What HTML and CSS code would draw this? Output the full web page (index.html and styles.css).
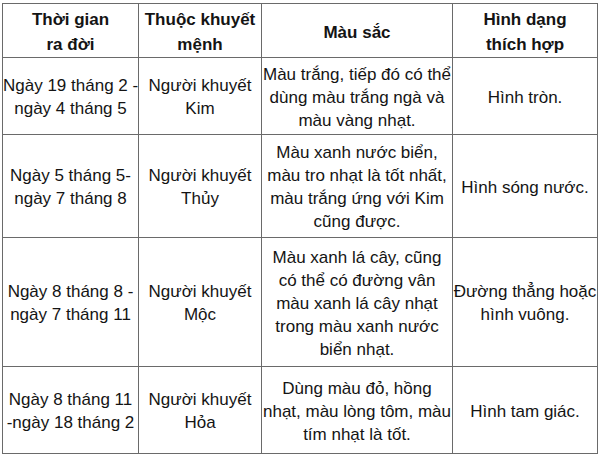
FILE: index.html
```html
<!DOCTYPE html>
<html lang="vi">
<head>
<meta charset="utf-8">
<title>Bảng màu sắc</title>
<link rel="stylesheet" href="styles.css">
</head>
<body>
<table class="grid">
  <colgroup>
    <col class="c1"><col class="c2"><col class="c3"><col class="c4">
  </colgroup>
  <thead>
    <tr class="r-head">
      <th>Thời gian<br>ra đời</th>
      <th>Thuộc khuyết<br>mệnh</th>
      <th>Màu sắc</th>
      <th>Hình dạng<br>thích hợp</th>
    </tr>
  </thead>
  <tbody>
    <tr class="r1">
      <td>Ngày 19 tháng 2 -<br>ngày 4 tháng 5</td>
      <td>Người khuyết<br>Kim</td>
      <td>Màu trắng, tiếp đó có thể<br>dùng màu trắng ngà và<br>màu vàng nhạt.</td>
      <td>Hình tròn.</td>
    </tr>
    <tr class="r2">
      <td>Ngày 5 tháng 5-<br>ngày 7 tháng 8</td>
      <td>Người khuyết<br>Thủy</td>
      <td>Màu xanh nước biển,<br>màu tro nhạt là tốt nhất,<br>màu trắng ứng với Kim<br>cũng được.</td>
      <td>Hình sóng nước.</td>
    </tr>
    <tr class="r3">
      <td>Ngày 8 tháng 8 -<br>ngày 7 tháng 11</td>
      <td>Người khuyết<br>Mộc</td>
      <td>Màu xanh lá cây, cũng<br>có thể có đường vân<br>màu xanh lá cây nhạt<br>trong màu xanh nước<br>biển nhạt.</td>
      <td>Đường thẳng hoặc<br>hình vuông.</td>
    </tr>
    <tr class="r4">
      <td>Ngày 8 tháng 11<br>-ngày 18 tháng 2</td>
      <td>Người khuyết<br>Hỏa</td>
      <td>Dùng màu đỏ, hồng<br>nhạt, màu lòng tôm, màu<br>tím nhạt là tốt.</td>
      <td>Hình tam giác.</td>
    </tr>
  </tbody>
</table>
</body>
</html>
```

FILE: styles.css
```css
html, body {
  margin: 0;
  padding: 0;
  background: #ffffff;
}

body {
  font-family: "Liberation Sans", Arial, sans-serif;
  color: #141414;
}

.grid {
  margin: 3px 0 0 2px;
  border-collapse: collapse;
  table-layout: fixed;
  width: 595px;
}

.c1 { width: 136px; }
.c2 { width: 123px; }
.c3 { width: 191px; }
.c4 { width: 145px; }

.grid th,
.grid td {
  border: 1px solid #6a6a6a;
  padding: 0;
  text-align: center;
  vertical-align: middle;
  white-space: nowrap;
  overflow: hidden;
}

.grid th {
  font-size: 17px;
  font-weight: bold;
  line-height: 25px;
  padding-top: 3px;
}

.grid td {
  font-size: 17px;
  line-height: 23px;
  padding-top: 2px;
}

.r-head { height: 54px; }
.r1 { height: 77px; }
.r2 { height: 103px; }
.r3 { height: 129px; }
.r4 { height: 87px; }
```
